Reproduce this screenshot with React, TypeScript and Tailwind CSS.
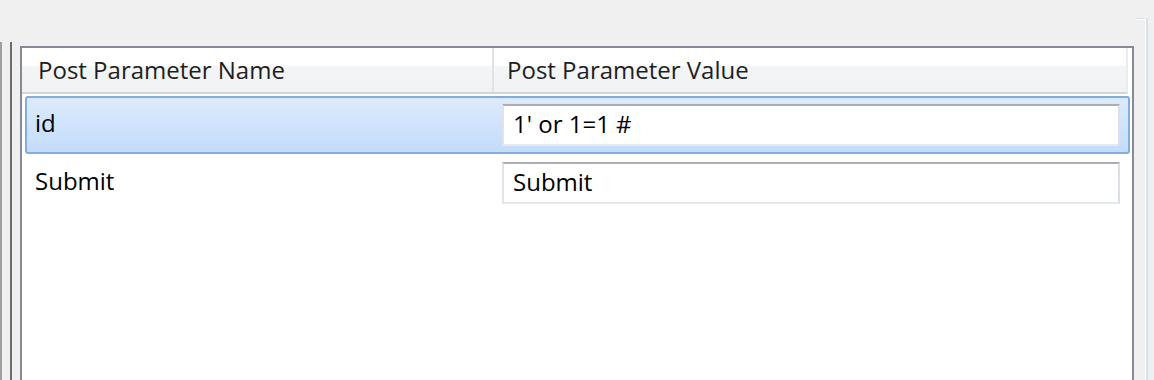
const font = { fontFamily: '"Open Sans", "Noto Sans", sans-serif' };

const rows = [
  { name: 'id', value: "1' or 1=1 #", selected: true },
  { name: 'Submit', value: 'Submit', selected: false },
];

function ValueBox({ value }: { value: string }) {
  return (
    <div className="flex h-[42px] w-[618px] items-center border-2 border-t-[#abadb3] border-l-[#e2e3ea] border-r-[#dbdfe6] border-b-[#e3e9ef] bg-white pb-[2px] pl-[9px] text-[24px] text-black">
      {value}
    </div>
  );
}

export default function App() {
  return (
    <div className="flex h-[380px] w-[1154px] overflow-hidden bg-[#f0f0f0]" style={font}>
      <div className="mt-[42px] w-[2px] bg-[#a0a0a0]" />
      <div className="w-[8px]" />
      <div className="mt-[42px] w-[2px] bg-[#6d6d6d]" />
      <div className="w-[8px]" />

      <div className="mt-[46px] flex w-[1114px] flex-col border-2 border-b-0 border-[#878a93] bg-white">
        <div className="flex h-[46px] w-[1106px] border-r-2 border-b-2 border-r-[#ececec] border-b-[#d5d5d5] bg-[linear-gradient(to_bottom,#ffffff_0%,#ffffff_40%,#f4f5f7_42%,#f1f2f4_100%)] text-[24px] text-[#1e1e1e]">
          <div className="flex w-[472px] items-center border-r-2 border-[#e3e3e3] pl-[16px]">Post Parameter Name</div>
          <div className="flex items-center pl-[13px]">Post Parameter Value</div>
        </div>

        <div className="flex flex-col pt-[2px] pl-[3px]">
          {rows.map((r) => (
            <div
              key={r.name}
              className={
                'flex h-[58px] w-[1105px] items-center rounded-[3px] border-2 ' +
                (r.selected
                  ? 'border-[#84acdd] bg-[linear-gradient(to_bottom,#dcebfc,#c3dcfa)]'
                  : 'border-transparent')
              }
            >
              <div className="w-[475px] shrink-0 pb-[4px] pl-[8px] text-[24px] text-black">{r.name}</div>
              <ValueBox value={r.value} />
            </div>
          ))}
        </div>
      </div>

      <div className="w-[2px]" />
      <div className="mt-[18px] flex">
        <div className="h-[2px] w-[9px] border-t border-[#d6e0ea] bg-white" />
        <div className="w-[3px] border-r-2 border-[#d6e0ea] bg-white" />
      </div>
    </div>
  );
}
